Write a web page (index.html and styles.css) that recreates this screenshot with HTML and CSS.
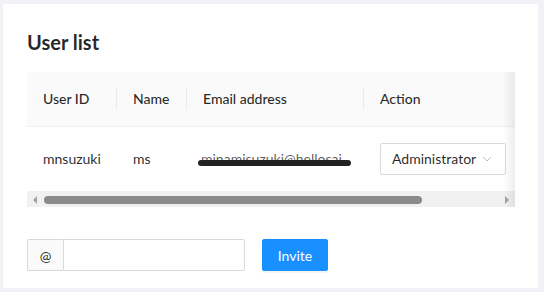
FILE: index.html
```html
<!DOCTYPE html>
<html lang="en">
<head>
    <meta charset="UTF-8">
    <title>User list</title>
    <link rel="stylesheet" href="styles.css">
</head>
<body>

<div class="card">
    <h2 class="title">User list</h2>

    <div class="table-box">
        <div class="table-scroll">
            <table class="users">
                <thead>
                    <tr>
                        <th class="col-id">User ID</th>
                        <th class="col-name">Name</th>
                        <th class="col-email">Email address</th>
                        <th class="col-action">Action</th>
                    </tr>
                </thead>
                <tbody>
                    <tr>
                        <td>mnsuzuki</td>
                        <td>ms</td>
                        <td class="email"><span class="hidden-mail">minamisuzuki@hellosai</span></td>
                        <td>
                            <div class="select">
                                <span>Administrator</span>
                                <svg class="chevron" width="10" height="10" viewBox="0 0 10 10">
                                    <path d="M1 3 L5 7 L9 3" fill="none" stroke="#bfbfbf" stroke-width="1"/>
                                </svg>
                            </div>
                        </td>
                    </tr>
                </tbody>
            </table>
        </div>
        <div class="scrollbar">
            <span class="arrow left"></span>
            <div class="track"><div class="thumb"></div></div>
            <span class="arrow right"></span>
        </div>
    </div>

    <div class="invite">
        <div class="input-group">
            <span class="addon">@</span>
            <input class="field" type="text">
        </div>
        <button class="btn-primary">Invite</button>
    </div>
</div>

</body>
</html>
```

FILE: styles.css
```css
* {
    margin: 0;
    padding: 0;
    box-sizing: border-box;
    font-family: 'Segoe UI', 'Lato', sans-serif;
}

body {
    background-color: #f0f2f5;
    padding: 4px 6px 4px 3px;
    height: 292px;
    color: rgba(0, 0, 0, 0.85);
    font-size: 14px;
}

.card {
    background-color: #fff;
    padding: 24px 24px 17px 24px;
    height: 284px;
}

.title {
    font-size: 20px;
    font-weight: 700;
    line-height: 28px;
    margin-bottom: 16px;
    color: rgba(0, 0, 0, 0.85);
}

.table-box {
    width: 488px;
    position: relative;
}

/* right edge shadow, the table is scrolled */
.table-box::after {
    content: '';
    position: absolute;
    top: 0;
    right: 0;
    bottom: 0;
    width: 12px;
    background: linear-gradient(to left, rgba(0, 0, 0, 0.07), rgba(0, 0, 0, 0));
    pointer-events: none;
}

.table-scroll {
    overflow: hidden;
}

.users {
    border-collapse: collapse;
    table-layout: fixed;
    width: 584px;
}

.users th {
    background-color: #fafafa;
    font-weight: 500;
    text-align: left;
    padding: 16px;
    line-height: 22px;
    border-bottom: 1px solid #f0f0f0;
    position: relative;
    white-space: nowrap;
}

.users th::before {
    content: '';
    position: absolute;
    right: 0;
    top: 16px;
    width: 1px;
    height: 22px;
    background-color: rgba(0, 0, 0, 0.06);
}

.users th.col-action::before {
    display: none;
}

.col-id { width: 90px; }
.col-name { width: 70px; }
.col-email { width: 177px; }

.users td {
    padding: 16px;
    line-height: 22px;
    border-bottom: 1px solid #f0f0f0;
    white-space: nowrap;
}

.users td.email {
    overflow: visible;
}

.hidden-mail {
    position: relative;
    margin-left: -2px;
    color: rgba(0, 0, 0, 0.65);
}

.hidden-mail::after {
    content: '';
    position: absolute;
    left: -3px;
    right: -9px;
    top: 10px;
    height: 6px;
    border-radius: 3px;
    background-color: #222;
}

.select {
    display: flex;
    align-items: center;
    justify-content: space-between;
    width: 126px;
    height: 32px;
    padding: 0 11px;
    border: 1px solid #d9d9d9;
    border-radius: 2px;
    background-color: #fff;
}

.chevron {
    margin-right: 2px;
}

.scrollbar {
    display: flex;
    align-items: center;
    height: 15px;
    background-color: #f1f1f1;
}

.arrow {
    width: 0;
    height: 0;
    border-top: 4px solid transparent;
    border-bottom: 4px solid transparent;
}

.arrow.left {
    margin: 0 7px 0 6px;
    border-right: 4px solid #a3a3a3;
}

.arrow.right {
    margin: 0 6px 0 7px;
    border-left: 4px solid #a3a3a3;
}

.track {
    flex: 1;
}

.thumb {
    width: 378px;
    height: 8px;
    border-radius: 4px;
    background-color: #8b8b8b;
}

.invite {
    display: flex;
    align-items: center;
    gap: 17px;
    margin-top: 32px;
}

.input-group {
    display: flex;
    height: 32px;
    width: 218px;
}

.addon {
    display: flex;
    align-items: center;
    justify-content: center;
    flex-shrink: 0;
    width: 36px;
    background-color: #fafafa;
    border: 1px solid #d9d9d9;
    border-right: none;
    border-radius: 2px 0 0 2px;
}

.field {
    flex: 1;
    min-width: 0;
    border: 1px solid #d9d9d9;
    border-radius: 0 2px 2px 0;
    outline: none;
}

.btn-primary {
    height: 32px;
    width: 66px;
    background-color: #1890ff;
    border: 1px solid #1890ff;
    border-radius: 2px;
    color: #fff;
    font-size: 14px;
    box-shadow: 0 2px 0 rgba(0, 0, 0, 0.045);
}
```
